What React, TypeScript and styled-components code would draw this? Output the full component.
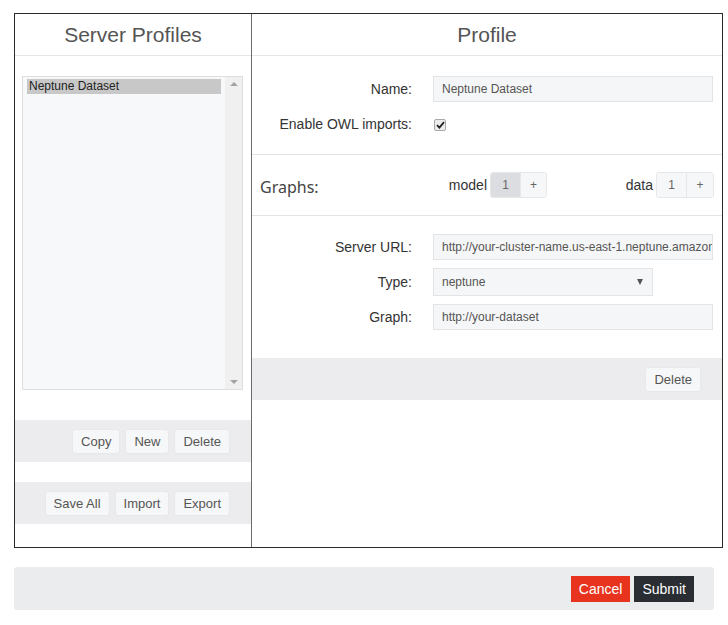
import React from "react";
import styled, { createGlobalStyle } from "styled-components";

const Global = createGlobalStyle`
  html, body { margin: 0; padding: 0; background: #fff; }
  body { font-family: "Liberation Sans", Arial, sans-serif; color: #333; }
  * { box-sizing: border-box; }
`;

const Page = styled.div`
  padding: 13px 0 0 14px;
  width: 728px;
`;

const Frame = styled.div`
  width: 709px;
  height: 535px;
  border: 1px solid #2b2b2b;
  display: grid;
  grid-template-columns: 236px 1px 1fr;
`;

const Divider = styled.div`
  background: #6b6b6b;
`;

const Column = styled.div`
  display: flex;
  flex-direction: column;
`;

const Header = styled.div`
  height: 42px;
  border-bottom: 1px solid #e5e5e5;
  display: flex;
  align-items: center;
  justify-content: center;
  font-size: 21px;
  color: #555;
  padding-top: 1px;
`;

const ListBox = styled.div`
  margin: 20px 0 0 7px;
  width: 221px;
  height: 314px;
  border: 1px solid #dedede;
  background: #f7f8f9;
  display: flex;
`;

const ListItems = styled.div`
  flex: 1;
  padding: 2px 4px;
`;

const ListItem = styled.div<{ $selected?: boolean }>`
  height: 15px;
  line-height: 15px;
  font-size: 12px;
  padding-left: 2px;
  color: #222;
  background: ${(p) => (p.$selected ? "#c8c8c8" : "transparent")};
`;

const Scrollbar = styled.div`
  width: 17px;
  background: #f0f0f1;
  display: flex;
  flex-direction: column;
  justify-content: space-between;
  align-items: center;
  padding: 5px 0;
`;

const Arrow = styled.div<{ $down?: boolean }>`
  width: 0;
  height: 0;
  border-left: 4px solid transparent;
  border-right: 4px solid transparent;
  ${(p) =>
    p.$down
      ? "border-top: 4px solid #a3a3a3;"
      : "border-bottom: 4px solid #a3a3a3;"}
`;

const Toolbar = styled.div<{ $top: number }>`
  margin-top: ${(p) => p.$top}px;
  height: 42px;
  background: #ececee;
  display: flex;
  align-items: center;
  justify-content: flex-end;
  gap: 5px;
  padding-right: 21px;
`;

const Button = styled.button`
  height: 25px;
  padding: 0 8px;
  font-family: "Liberation Sans", Arial, sans-serif;
  font-size: 13px;
  color: #555;
  background: #f6f7f8;
  border: 1px solid #e7e8ea;
  border-radius: 3px;
`;

const Form = styled.div<{ $top: number; $bottom: number }>`
  display: grid;
  grid-template-columns: 160px 1fr;
  column-gap: 21px;
  row-gap: 8px;
  align-items: center;
  padding: ${(p) => p.$top}px 9px ${(p) => p.$bottom}px 0;
`;

const Section = styled.div`
  border-bottom: 1px solid #e3e3e3;
`;

const Label = styled.label`
  text-align: right;
  font-size: 14px;
  color: #333;
`;

const Input = styled.div<{ $width?: number }>`
  height: 26px;
  width: ${(p) => (p.$width ? `${p.$width}px` : "auto")};
  background: #f5f6f7;
  border: 1px solid #e3e4e6;
  font-size: 12px;
  color: #555;
  display: flex;
  align-items: center;
  padding-left: 8px;
  white-space: nowrap;
  overflow: hidden;
`;

const Select = styled(Input)`
  height: 28px;
  justify-content: space-between;
  padding-right: 9px;
`;

const SelectArrow = styled.div`
  width: 0;
  height: 0;
  border-left: 3.5px solid transparent;
  border-right: 3.5px solid transparent;
  border-top: 6px solid #555;
`;

const CheckBox = styled.span`
  width: 12px;
  height: 12px;
  margin: 9px 0 0 1px;
  border: 1px solid #a9a9a9;
  border-radius: 2px;
  background: #ececec;
  display: flex;
  align-items: center;
  justify-content: center;
`;

const CheckRow = styled.div`
  height: 28px;
  display: flex;
  align-items: flex-start;
`;

const GraphsRow = styled.div`
  height: 61px;
  border-bottom: 1px solid #e3e3e3;
  display: grid;
  grid-template-columns: 1fr 160px 167px;
  align-items: center;
  padding-right: 8px;
`;

const GraphsTitle = styled.div`
  padding-left: 8px;
  font-family: "Noto Sans", Lato, sans-serif;
  font-size: 16px;
  color: #444;
  margin-top: 3px;
`;

const GraphGroup = styled.div`
  display: flex;
  justify-content: flex-end;
  align-items: center;
  gap: 3px;
`;

const GroupLabel = styled.span`
  font-size: 14px;
  color: #333;
  margin-top: -1px;
`;

const BtnGroup = styled.div`
  display: flex;
  height: 26px;
  border: 1px solid #e6e7e9;
  border-radius: 3px;
  overflow: hidden;
`;

const Seg = styled.div<{ $active?: boolean; $w: number }>`
  width: ${(p) => p.$w}px;
  display: flex;
  align-items: center;
  justify-content: center;
  font-size: 12px;
  color: #666;
  background: ${(p) => (p.$active ? "#dcdde0" : "#f6f7f8")};
  & + & { border-left: 1px solid #e6e7e9; }
`;

const PanelFooter = styled.div`
  height: 42px;
  background: #ececee;
  display: flex;
  align-items: center;
  justify-content: flex-end;
  padding-right: 21px;
`;

const BottomBar = styled.div`
  margin-top: 19px;
  width: 700px;
  height: 43px;
  background: #ebecee;
  border-radius: 3px;
  display: flex;
  align-items: center;
  justify-content: flex-end;
  gap: 4px;
  padding-right: 20px;
`;

const ActionButton = styled.button<{ $variant: "danger" | "dark" }>`
  height: 26px;
  padding: 0 8px;
  border: none;
  border-radius: 0;
  font-family: "Liberation Sans", Arial, sans-serif;
  font-size: 14px;
  color: #fff;
  background: ${(p) => (p.$variant === "danger" ? "#e8341f" : "#2a2d32")};
`;

export default function App() {
  return (
    <Page>
      <Global />
      <Frame>
        <Column>
          <Header>Server Profiles</Header>
          <ListBox>
            <ListItems>
              <ListItem $selected>Neptune Dataset</ListItem>
            </ListItems>
            <Scrollbar>
              <Arrow />
              <Arrow $down />
            </Scrollbar>
          </ListBox>
          <Toolbar $top={30}>
            <Button>Copy</Button>
            <Button>New</Button>
            <Button>Delete</Button>
          </Toolbar>
          <Toolbar $top={20}>
            <Button>Save All</Button>
            <Button>Import</Button>
            <Button>Export</Button>
          </Toolbar>
        </Column>
        <Divider />
        <Column>
          <Header>Profile</Header>
          <Section>
            <Form $top={20} $bottom={16}>
              <Label>Name:</Label>
              <Input>Neptune Dataset</Input>
              <Label>Enable OWL imports:</Label>
              <CheckRow>
                <CheckBox>
                  <svg width="9" height="8" viewBox="0 0 9 8">
                    <path d="M1 4.2 L3.4 6.6 L8 1.2" fill="none" stroke="#222" strokeWidth="1.8" />
                  </svg>
                </CheckBox>
              </CheckRow>
            </Form>
          </Section>
          <GraphsRow>
            <GraphsTitle>Graphs:</GraphsTitle>
            <GraphGroup>
              <GroupLabel>model</GroupLabel>
              <BtnGroup>
                <Seg $active $w={29}>1</Seg>
                <Seg $w={26}>+</Seg>
              </BtnGroup>
            </GraphGroup>
            <GraphGroup>
              <GroupLabel>data</GroupLabel>
              <BtnGroup>
                <Seg $w={29}>1</Seg>
                <Seg $w={27}>+</Seg>
              </BtnGroup>
            </GraphGroup>
          </GraphsRow>
          <Form $top={18} $bottom={28}>
            <Label>Server URL:</Label>
            <Input>http://your-cluster-name.us-east-1.neptune.amazonaws.com:8182</Input>
            <Label>Type:</Label>
            <Select $width={220}>
              <span>neptune</span>
              <SelectArrow />
            </Select>
            <Label>Graph:</Label>
            <Input>http://your-dataset</Input>
          </Form>
          <PanelFooter>
            <Button>Delete</Button>
          </PanelFooter>
        </Column>
      </Frame>
      <BottomBar>
        <ActionButton $variant="danger">Cancel</ActionButton>
        <ActionButton $variant="dark">Submit</ActionButton>
      </BottomBar>
    </Page>
  );
}
